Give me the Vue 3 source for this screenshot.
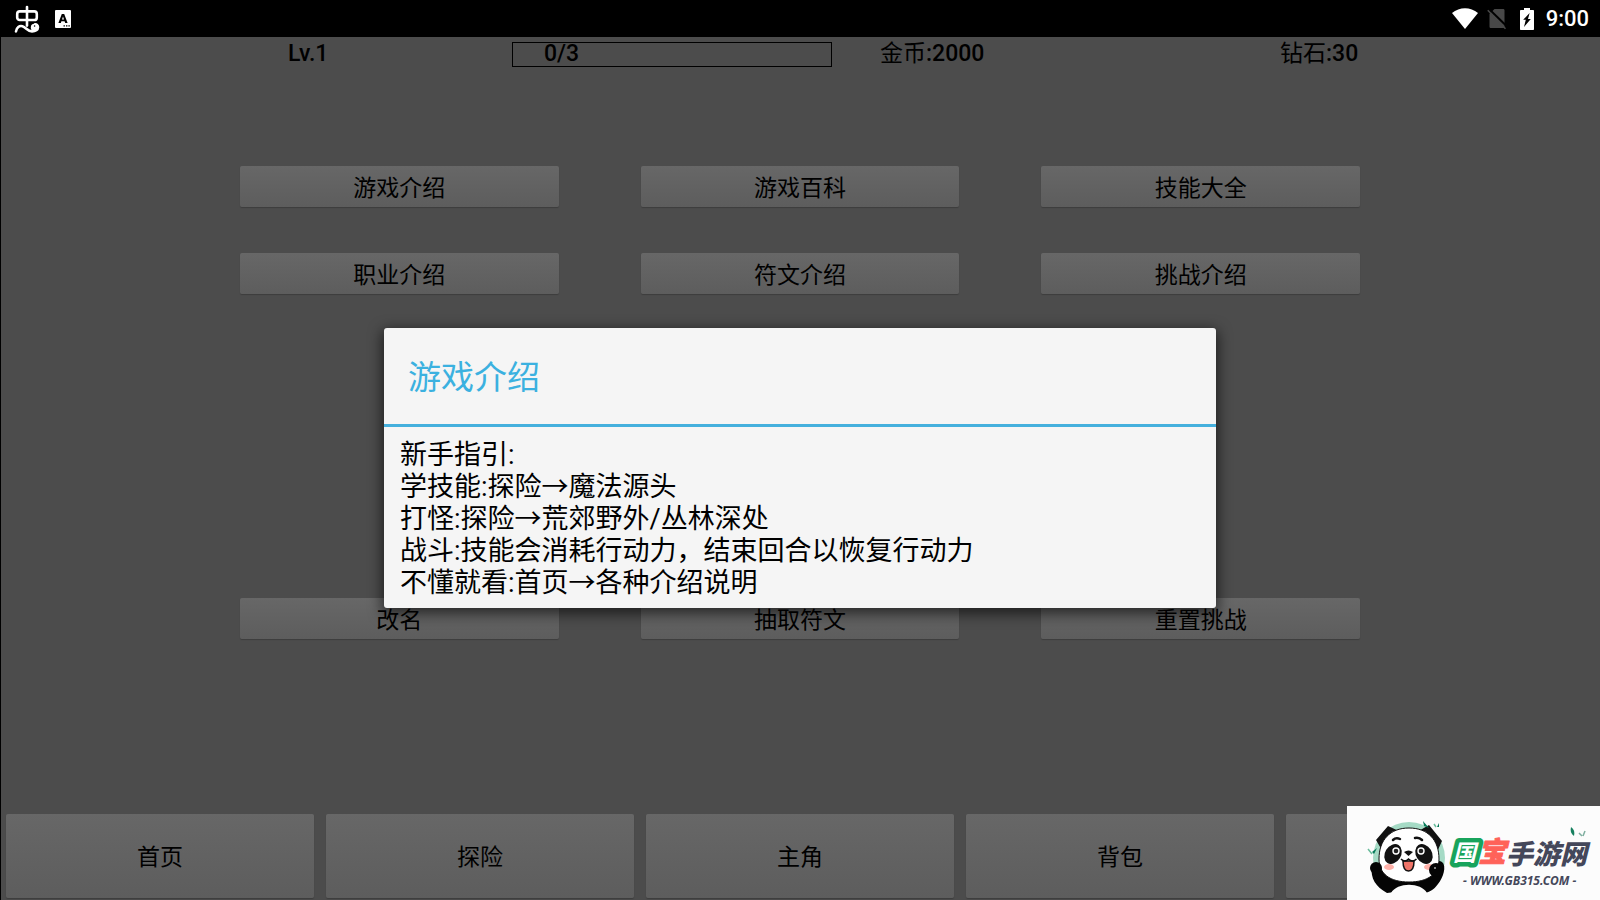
<template>
  <div class="pantalla">
    <header class="barra-estado">
      <div class="avisos">
        <svg class="icono-bicho" viewBox="0 0 26 28" width="26" height="28">
          <g fill="none" stroke="#fff" stroke-width="2.6" stroke-linecap="round" stroke-linejoin="round">
            <rect x="3.2" y="6.4" width="19.6" height="8.6" rx="2.6" />
            <path d="M13 2v18.6" />
            <path d="M2 26.400c.6-4.200 3.400-6 6.400-5.200 3.600 1 5.200 5.200 9.600 5.200 3.600 0 6-1.800 6-4.200 0-1.900-1.500-2.900-3-2.800" />
          </g>
          <circle cx="20.4" cy="22.4" r="3.600" fill="#fff" />
          <circle cx="20.6" cy="21" r="0.8" fill="#000" />
        </svg>
        <svg class="icono-teclado" viewBox="0 0 16 18" width="16" height="18">
          <rect width="16" height="18" rx="1" fill="#fff" />
          <path d="M3.400 13 6.800 4h2.400l3.400 9h-2.400l-.6-1.800H6.400L5.800 13zM7 9.500h2L8 6.500z" fill="#000" fill-rule="evenodd" />
          <path d="M8.500 15.800h1.400M11 15.800h1.400M13.400 15.800h1.400" stroke="#000" stroke-width="1.3" />
        </svg>
      </div>
      <div class="sistema">
        <svg viewBox="0 0 26 22" width="26" height="22">
          <path d="M0 5C7.500-1.300 18.500-1.300 26 5L13 21z" fill="#fff" />
        </svg>
        <svg viewBox="0 0 20 22" width="20" height="22">
          <path d="M7.500 1H16c1 0 1.500.5 1.500 1.500v16c0 1-.5 1.500-1.500 1.500H4c-1 0-1.500-.5-1.500-1.500V6z" fill="#484848" />
          <path d="M1.500.5 20 18.500" stroke="#000" stroke-width="2" />
          <path d="M.8 2.200 18.500 20.800" stroke="#484848" stroke-width="1.600" />
        </svg>
        <svg class="bateria" viewBox="0 0 14 22" width="14" height="22">
          <path d="M4 0h6v2h3c.6 0 1 .4 1 1v18c0 .6-.4 1-1 1H1c-.6 0-1-.4-1-1V3c0-.6.4-1 1-1h3z" fill="#fff" />
          <path d="M9.600 5 3.200 11.800h2.600L4 19l6.800-8H8z" fill="#000" />
        </svg>
        <span class="hora">9:00</span>
      </div>
    </header>

    <main class="juego">
      <div class="datos">
        <b>Lv.{{ jugador.nivel }}</b>
        <b class="experiencia">{{ jugador.exp }}/{{ jugador.expMax }}</b>
        <span>金币<b>:{{ jugador.monedas }}</b></span>
        <span>钻石<b>:{{ jugador.diamantes }}</b></span>
      </div>

      <div class="opciones">
        <button
          v-for="opcion in introducciones"
          :key="opcion"
          type="button"
          class="boton"
          @click="abrir(opcion)"
        >{{ opcion }}</button>
      </div>

      <div class="opciones acciones">
        <button v-for="accion in acciones" :key="accion" type="button" class="boton">{{ accion }}</button>
      </div>

      <nav class="menu">
        <button
          v-for="seccion in secciones"
          :key="seccion"
          type="button"
          class="boton boton-menu"
        >{{ seccion }}</button>
      </nav>

      <div v-if="dialogoAbierto" class="capa" @click.self="dialogoAbierto = false">
        <section class="dialogo" role="dialog" aria-labelledby="titulo-dialogo">
          <h1 id="titulo-dialogo">{{ titulo }}</h1>
          <div class="texto">
            <p v-for="linea in guia" :key="linea">{{ linea }}</p>
          </div>
        </section>
      </div>
    </main>

    <aside class="marca">
      <svg class="panda" viewBox="0 0 84 76" width="84" height="76">
        <circle cx="42" cy="38" r="36" fill="#a5dac5" />
        <path d="M9 20 21 6l13 6-18 20zM50 12l12-7 13 16-5 11z" fill="#111" />
        <path d="M5 47c5-5 10-3 13 3l49 2c-2-8 3-13 8-10 5 4 1 16-4 22-4 6-10 9-15 9l-13-3-23 3C9 67 3 58 5 47z" fill="#050505" />
        <path d="M24 73c6-11 30-11 36 0-9 4-27 4-36 0z" fill="#fcfcfc" />
        <path d="M42 8c19 0 30 12 30 31 0 15-11 23-30 23S12 54 12 39C12 20 23 8 42 8z" fill="#fff" stroke="#111" />
        <path d="M26 20q3-3 7-1M48 18q4-1 7 2" fill="none" stroke="#111" stroke-width="2.5" stroke-linecap="round" />
        <ellipse cx="26" cy="34" rx="8" ry="10.5" transform="rotate(32 26 34)" fill="#111" />
        <ellipse cx="57" cy="34" rx="8" ry="10.5" transform="rotate(-32 57 34)" fill="#111" />
        <circle cx="29" cy="31" r="3.7" fill="#fff" />
        <circle cx="54" cy="31" r="3.7" fill="#fff" />
        <circle cx="29" cy="31" r="2.3" fill="#222" />
        <circle cx="54" cy="31" r="2.3" fill="#222" />
        <path d="M37 32q4.500-3 9 0l-4.500 4z" fill="#111" />
        <ellipse cx="22" cy="47" rx="5" ry="3" fill="#ffb1a9" />
        <ellipse cx="62" cy="47" rx="5" ry="3" fill="#ffb1a9" />
        <path d="M36 41h11c0 6-2 10-5.500 10S36 47 36 41z" fill="#ef7468" stroke="#111" stroke-width="1.5" />
        <path d="M34 39q4 4 7.500 0 4 4 8 0" fill="none" stroke="#111" stroke-width="1.5" />
        <circle cx="69" cy="50" r="7" fill="#050505" />
        <circle cx="9" cy="48" r="6" fill="#050505" />
        <circle cx="68" cy="48" r="1" fill="#aaa" />
        <path d="M56 1l6 7-5-2zM70 7l2-4v4zM5 32l5-4-3 6z" fill="#087b5a" />
        <path d="M1 29l4 5M67 4l2 3" stroke="#6bbd9d" stroke-width="1.5" />
      </svg>
      <div class="letras">
        <div class="nombre">
          <svg class="guobao" viewBox="0 0 55 36" width="55" height="36">
            <text class="guo" x="2" y="27">国</text>
            <text class="bao" x="27" y="28">宝</text>
          </svg>
          <span class="resto">手游网</span>
        </div>
        <div class="web">- WWW.GB315.COM -</div>
        <svg class="hojas" viewBox="0 0 16 12" width="16" height="12">
          <path d="M1 1c3 2 4 5 3 9-3-2-4-5-3-9z" fill="#17805f" />
          <path d="M9 7l3 3M15 5l-2 5" stroke="#7eae9f" stroke-width="1.5" />
        </svg>
      </div>
    </aside>
  </div>
</template>

<script setup>
import { ref } from 'vue'

const jugador = ref({ nivel: 1, exp: 0, expMax: 3, monedas: 2000, diamantes: 30 })

const introducciones = ['游戏介绍', '游戏百科', '技能大全', '职业介绍', '符文介绍', '挑战介绍']
const acciones = ['改名', '抽取符文', '重置挑战']
const secciones = ['首页', '探险', '主角', '背包', '']

const guia = [
  '新手指引:',
  '学技能:探险→魔法源头',
  '打怪:探险→荒郊野外/丛林深处',
  '战斗:技能会消耗行动力，结束回合以恢复行动力',
  '不懂就看:首页→各种介绍说明'
]

const dialogoAbierto = ref(true)
const titulo = ref('游戏介绍')

const abrir = (opcion) => {
  titulo.value = opcion
  dialogoAbierto.value = true
}
</script>

<style>
body {
  margin: 0;
  background-color: #4c4c4c;
}
</style>

<style scoped>
.pantalla {
  position: relative;
  display: flex;
  flex-direction: column;
  min-height: 100vh;
  box-sizing: border-box;
  font-family: Roboto, "Noto Sans CJK SC", sans-serif;
  font-size: 23px;
  color: #000;
}

.barra-estado {
  display: flex;
  justify-content: space-between;
  align-items: center;
  height: 37px;
  padding: 0 11px 0 14px;
  box-sizing: border-box;
  background-color: #000;
}

.avisos,
.sistema {
  display: flex;
  align-items: center;
}

.avisos {
  gap: 15px;
}

.sistema {
  gap: 9px;
}

.bateria {
  margin: 0 3px 0 4px;
}

.hora {
  color: #fff;
  font-size: 22px;
  font-weight: 500;
  line-height: 36px;
}

.juego {
  position: relative;
  flex: 1;
  display: flex;
  flex-direction: column;
  background-color: #4c4c4c;
  box-shadow: inset 1px 0 #000;
}

.datos {
  display: grid;
  grid-template-columns: 14fr 23fr 25fr 20fr;
  align-items: center;
  height: 28px;
  padding: 3px 0 0 18%;
  line-height: 24px;
}

.datos b {
  font-weight: 500;
}

.experiencia {
  width: 87%;
  height: 25px;
  line-height: 22px;
  padding-left: 31px;
  box-sizing: border-box;
  border: 1px solid #000;
}

.opciones {
  display: grid;
  grid-template-columns: repeat(3, 1fr);
  gap: 46px 82px;
  margin-top: 98px;
  padding: 0 15%;
}

.acciones {
  margin-top: 304px;
}

.boton {
  height: 41px;
  padding: 0 0 2px;
  border: none;
  border-radius: 2px;
  background: linear-gradient(#676767, #5d5d5d);
  box-shadow: 0 1px 1px rgba(0, 0, 0, 0.2);
  font-family: inherit;
  font-size: 23px;
  color: #000;
  cursor: pointer;
}

.menu {
  display: grid;
  grid-template-columns: repeat(5, 1fr);
  gap: 12px;
  margin-top: auto;
  padding: 0 6px 2px;
}

.boton-menu {
  height: 84px;
}

.capa {
  position: absolute;
  inset: 0;
  display: flex;
  align-items: center;
  justify-content: center;
  padding-bottom: 2px;
}

.dialogo {
  width: 52%;
  border-radius: 3px;
  background-color: #f5f5f5;
  box-shadow: 0 4px 14px 2px rgba(0, 0, 0, 0.6);
}

.dialogo h1 {
  margin: 0;
  padding: 4px 24px 0;
  border-bottom: 3px solid #45b0dd;
  font-size: 33px;
  font-weight: 400;
  line-height: 92px;
  color: #3bb1e0;
}

.texto {
  padding: 12px 16px 9px;
}

.texto p {
  margin: 0;
  font-size: 27px;
  line-height: 32px;
}

.marca {
  position: absolute;
  right: 0;
  bottom: 0;
  display: flex;
  align-items: flex-end;
  width: 253px;
  height: 94px;
  padding: 0 10px 4px 20px;
  box-sizing: border-box;
  background-color: #fcfcfc;
}

.panda {
  flex: none;
}

.letras {
  position: relative;
  flex: 1;
  padding-bottom: 6px;
}

.nombre {
  display: flex;
  align-items: center;
  height: 36px;
  margin-bottom: 2px;
  font-style: italic;
  font-weight: 900;
  white-space: nowrap;
}

.guobao {
  flex: none;
  overflow: visible;
}

.guo,
.bao {
  stroke-linejoin: round;
  paint-order: stroke;
}

.guo {
  font-size: 23px;
  font-weight: 700;
  fill: #fff;
  stroke: #18a45c;
  stroke-width: 9px;
}

.bao {
  font-size: 28px;
  fill: #ff6259;
  stroke: #ff6259;
  stroke-width: 1px;
}

.resto {
  font-size: 27px;
  color: #44475a;
}

.web {
  padding-left: 12px;
  font-family: "Noto Sans", sans-serif;
  font-size: 12px;
  font-style: italic;
  font-weight: 700;
  line-height: 18px;
  white-space: nowrap;
  color: #44475a;
}

.hojas {
  position: absolute;
  top: -8px;
  right: 4px;
}
</style>
